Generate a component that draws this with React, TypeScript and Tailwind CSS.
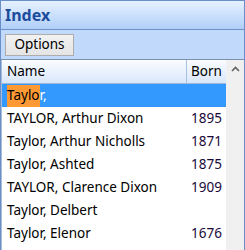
import React from 'react';

const rows = [
  { name: 'TAYLOR, Arthur Dixon', born: '1895' },
  { name: 'Taylor, Arthur Nicholls', born: '1871' },
  { name: 'Taylor, Ashted', born: '1875' },
  { name: 'TAYLOR, Clarence Dixon', born: '1909' },
  { name: 'Taylor, Delbert', born: '' },
  { name: 'Taylor, Elenor', born: '1676' },
];

export default function App() {
  return (
    <div className="w-[245px] h-[250px] overflow-hidden flex flex-col border-x border-t border-[#6a8fc8] bg-white font-['Noto_Sans',sans-serif] text-[13.5px] text-black">
      {/* Title */}
      <div className="h-[29px] shrink-0 flex items-center pl-[4px] bg-gradient-to-b from-[#e6f1ff] to-[#b0cff8] border-b border-[#6f93c9]">
        <span className="text-[16px] font-bold text-[#1d4c9c] leading-none">Index</span>
      </div>

      {/* Toolbar */}
      <div className="h-[30px] shrink-0 bg-[#c1dafc] pl-[4px] pt-[4px] border-b border-[#7d90ab]">
        <button className="h-[22px] w-[69px] border border-[#adadad] bg-gradient-to-b from-[#f2f2f2] to-[#e4e4e4] text-[13.5px] leading-none text-black">
          Options
        </button>
      </div>

      {/* List */}
      <div className="flex-1 flex min-h-0 border-l border-[#a9bdd6]">
        <div className="flex-1 min-w-0">
          <div className="h-[24px] flex bg-gradient-to-b from-[#fafcff] to-[#d9e7fb] border-b border-[#9db8e0]">
            <div className="w-[185px] flex items-center pl-[5px] border-r border-[#a7c0e6]">Name</div>
            <div className="flex-1 flex items-center pl-[4px]">Born</div>
          </div>
          <div className="h-[23px] flex items-center bg-[#3399ff] pl-[5px]">
            <span className="bg-[#ff9933] h-[22px] flex items-center text-black">Taylo</span>
            <span className="text-white">r,</span>
          </div>
          {rows.map((r) => (
            <div key={r.name} className="h-[23px] flex items-center">
              <div className="w-[186px] pl-[5px] whitespace-nowrap">{r.name}</div>
              <div className="flex-1 text-right pr-[4px] text-[#1a0a3a]">{r.born}</div>
            </div>
          ))}
        </div>
        <div className="w-[18px] shrink-0 bg-[#f0f0f0] flex justify-center pt-[6px]">
          <svg width="9" height="6" viewBox="0 0 9 6">
            <path d="M1 5 L4.5 1.5 L8 5" fill="none" stroke="#606060" strokeWidth="1.6" />
          </svg>
        </div>
      </div>
    </div>
  );
}
